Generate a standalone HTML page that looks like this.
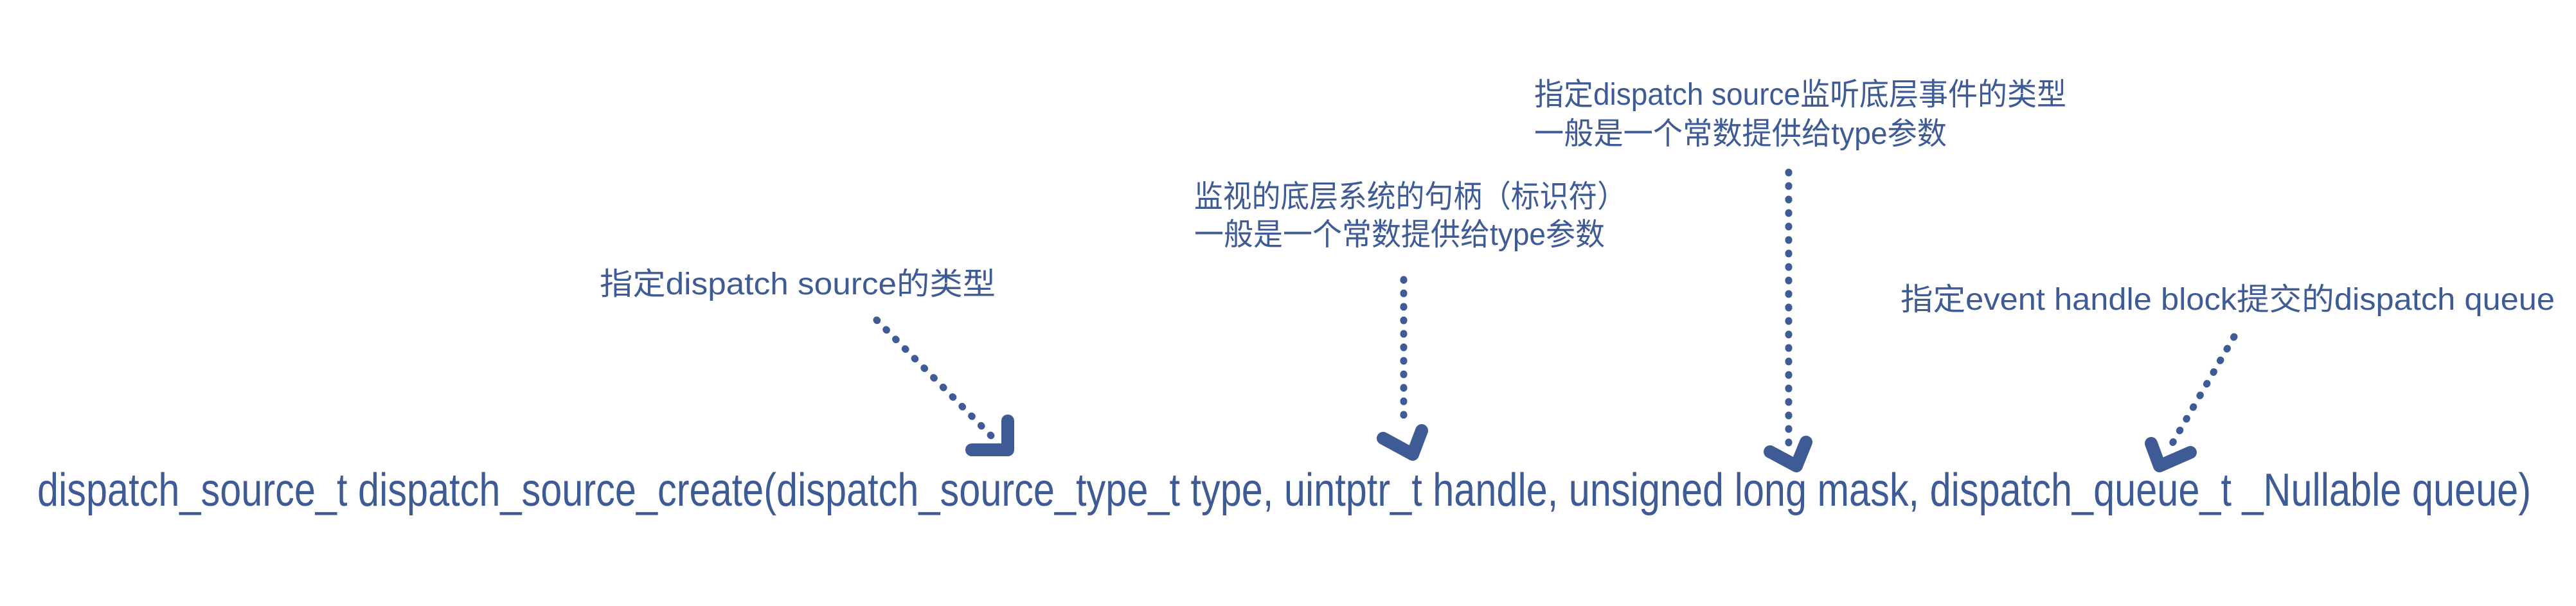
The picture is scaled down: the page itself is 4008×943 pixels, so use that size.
<!DOCTYPE html>
<html><head><meta charset="utf-8"><style>
html,body{margin:0;padding:0;background:#fff;}
svg{display:block;}
text{font-family:"Liberation Sans","Noto Sans CJK SC",sans-serif;fill:#3f5b96;}
</style></head><body>
<svg width="4008" height="943" viewBox="0 0 4008 943" xmlns="http://www.w3.org/2000/svg">
<g font-size="48">
<text x="933" y="458" textLength="616" lengthAdjust="spacingAndGlyphs">指定dispatch source的类型</text>
<text x="1858" y="322" textLength="672" lengthAdjust="spacingAndGlyphs">监视的底层系统的句柄（标识符）</text>
<text x="1858" y="381" textLength="639" lengthAdjust="spacingAndGlyphs">一般是一个常数提供给type参数</text>
<text x="2387" y="163" textLength="828" lengthAdjust="spacingAndGlyphs">指定dispatch source监听底层事件的类型</text>
<text x="2387" y="224" textLength="642" lengthAdjust="spacingAndGlyphs">一般是一个常数提供给type参数</text>
<text x="2957" y="482" textLength="1018" lengthAdjust="spacingAndGlyphs">指定event handle block提交的dispatch queue</text>
</g>
<text x="58" y="787" font-size="72" textLength="3880" lengthAdjust="spacingAndGlyphs">dispatch_source_t dispatch_source_create(dispatch_source_type_t type, uintptr_t handle, unsigned long mask, dispatch_queue_t _Nullable queue)</text>
<g stroke="#3f5b96" fill="none" stroke-linecap="round" stroke-linejoin="round">
<g stroke-width="11" stroke-dasharray="1 20">
<line x1="1364" y1="498" x2="1542" y2="678"/>
<line x1="2184" y1="435" x2="2184" y2="662"/>
<line x1="2783" y1="268" x2="2783" y2="690"/>
<line x1="3476" y1="524" x2="3377" y2="695"/>
</g>
<g stroke-width="20">
<path d="M1512 700 L1568 700 L1568 655"/>
<path d="M2152 682 L2198 707 L2212 670"/>
<path d="M2754 703 L2795 725 L2810 688"/>
<path d="M3347 690 L3360 725 L3408 704"/>
</g>
</g>
</svg>
</body></html>
